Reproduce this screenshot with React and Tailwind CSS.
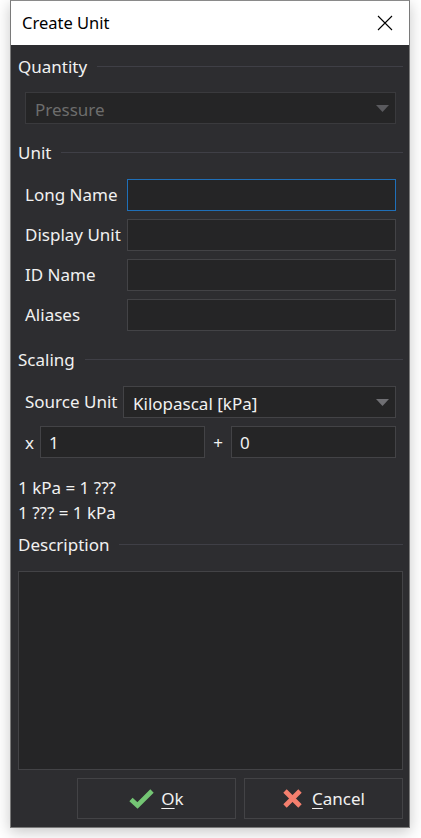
import React from 'react'

const font = { fontFamily: '"Segoe UI", "Noto Sans", sans-serif' }

function GroupHeader({ title, className = '' }) {
    return (
        <div className={`flex items-center h-[22px] ${className}`}>
            <span className="text-[#f1f1f1] text-[17px] leading-none">{title}</span>
            <div className="flex-1 h-px bg-[#3f3f46] ml-[10px]" />
        </div>
    )
}

function TextBox({ value = '', focused = false, className = '' }) {
    return (
        <div
            className={`h-[32px] bg-[#252526] border flex items-center px-[7px] pt-[2px] text-[17px] text-[#f1f1f1] ${focused ? 'border-[#1f6fb8]' : 'border-[#434346]'} ${className}`}
        >
            {value}
        </div>
    )
}

function ComboBox({ value, disabled = false, className = '' }) {
    return (
        <div
            className={`h-[32px] bg-[#252526] border flex items-center pl-[9px] pr-[6px] text-[17px] ${disabled ? 'border-[#3a3a3d] text-[#6d6d6d]' : 'border-[#434346] text-[#f1f1f1]'} ${className}`}
        >
            <span className="flex-1 pt-[3px]">{value}</span>
            <svg width="13" height="7" viewBox="0 0 13 7">
                <polygon points="0,0 13,0 6.5,7" fill={disabled ? '#5a5a5e' : '#6f6f73'} />
            </svg>
        </div>
    )
}

function FieldRow({ label, focused }) {
    return (
        <div className="flex items-center pl-[7px]">
            <span className="w-[102px] text-[17px] text-[#f1f1f1]">{label}</span>
            <TextBox focused={focused} className="flex-1" />
        </div>
    )
}

export default function App() {
    return (
        <div className="w-[421px] h-[838px] bg-white pl-[10px]" style={font}>
            <div className="w-[400px] h-[828px] border border-[#7a7a7a] border-t-[#8a8a8a] shadow-[0_4px_14px_rgba(0,0,0,0.22)] flex flex-col">
                {/* title bar */}
                <div className="h-[44px] bg-white flex items-center justify-between pl-[11px] pr-[16px]">
                    <span className="text-[16.5px] text-black">Create Unit</span>
                    <svg width="16" height="16" viewBox="0 0 16 16">
                        <path d="M1 1 L15 15 M15 1 L1 15" stroke="#000" strokeWidth="1.1" />
                    </svg>
                </div>

                {/* body */}
                <div className="flex-1 bg-[#2d2d30] flex flex-col pt-[10px] pl-[7px] pr-[6px] pb-[8px]">
                    <GroupHeader title="Quantity" />
                    <div className="pl-[7px] pr-[7px] mt-[15px]">
                        <ComboBox value="Pressure" disabled />
                    </div>

                    <GroupHeader title="Unit" className="mt-[17px]" />
                    <div className="flex flex-col gap-[8px] mt-[16px] pr-[7px]">
                        <FieldRow label="Long Name" focused />
                        <FieldRow label="Display Unit" />
                        <FieldRow label="ID Name" />
                        <FieldRow label="Aliases" />
                    </div>

                    <GroupHeader title="Scaling" className="mt-[17px]" />
                    <div className="flex flex-col gap-[8px] mt-[16px] pl-[7px] pr-[7px]">
                        <div className="flex items-center">
                            <span className="w-[98px] text-[17px] text-[#f1f1f1]">Source Unit</span>
                            <ComboBox value="Kilopascal [kPa]" className="flex-1" />
                        </div>
                        <div className="flex items-center">
                            <span className="w-[15px] text-[17px] text-[#f1f1f1] pt-[2px]">x</span>
                            <TextBox value="1" className="w-[165px] pl-[8px]" />
                            <span className="w-[26px] text-center text-[17px] text-[#f1f1f1] pt-[2px]">+</span>
                            <TextBox value="0" className="flex-1 pl-[8px]" />
                        </div>
                    </div>

                    <div className="mt-[17px] text-[17px] text-[#f1f1f1] leading-[25px]">
                        <div>1 kPa = 1 ???</div>
                        <div>1 ??? = 1 kPa</div>
                    </div>

                    <GroupHeader title="Description" className="mt-[8px]" />
                    <div className="mt-[16px] h-[199px] bg-[#252526] border border-[#434346]" />

                    <div className="flex justify-end gap-[8px] mt-[8px]">
                        <button className="w-[159px] h-[41px] border border-[#434346] bg-[#2d2d30] flex items-center justify-center gap-[7px] text-[17px] text-[#f1f1f1]">
                            <svg width="25" height="21" viewBox="0 0 25 21">
                                <path d="M2 11.5 L8.5 17.5 L23 3" fill="none" stroke="#74c574" strokeWidth="4.8" strokeLinejoin="miter" />
                            </svg>
                            <span><span className="underline underline-offset-[3px]">O</span>k</span>
                        </button>
                        <button className="w-[159px] h-[41px] border border-[#434346] bg-[#2d2d30] flex items-center justify-center gap-[9px] text-[17px] text-[#f1f1f1]">
                            <svg width="21" height="21" viewBox="0 0 21 21">
                                <path d="M3 3 L18 18 M18 3 L3 18" fill="none" stroke="#f47f6e" strokeWidth="4.8" />
                            </svg>
                            <span><span className="underline underline-offset-[3px]">C</span>ancel</span>
                        </button>
                    </div>
                </div>
            </div>
        </div>
    )
}
